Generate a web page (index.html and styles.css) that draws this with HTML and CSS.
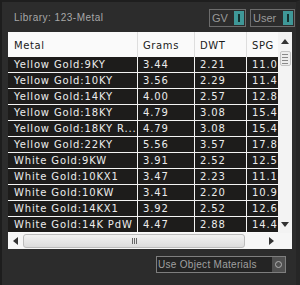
FILE: index.html
```html
<!DOCTYPE html>
<html>
<head>
<meta charset="utf-8">
<link rel="stylesheet" href="styles.css">
</head>
<body>
<div class="panel">
  <div class="topbar">
    <span class="lib">Library: 123-Metal</span>
    <div class="toggles">
      <div class="toggle"><span class="tlabel">GV</span><span class="tbtn"></span></div>
      <div class="toggle user"><span class="tlabel">User</span><span class="tbtn"></span></div>
    </div>
  </div>
  <div class="listbox">
    <div class="table">
      <div class="head">
        <div class="hc c1">Metal</div>
        <div class="hc">Grams</div>
        <div class="hc">DWT</div>
        <div class="hc">SPG</div>
      </div>
      <div class="body">
        <div class="row"><div class="c c1">Yellow Gold:9KY</div><div class="c">3.44</div><div class="c">2.21</div><div class="c">11.08</div></div>
        <div class="row"><div class="c c1">Yellow Gold:10KY</div><div class="c">3.56</div><div class="c">2.29</div><div class="c">11.45</div></div>
        <div class="row"><div class="c c1">Yellow Gold:14KY</div><div class="c">4.00</div><div class="c">2.57</div><div class="c">12.88</div></div>
        <div class="row"><div class="c c1">Yellow Gold:18KY</div><div class="c">4.79</div><div class="c">3.08</div><div class="c">15.41</div></div>
        <div class="row"><div class="c c1">Yellow Gold:18KY R...</div><div class="c">4.79</div><div class="c">3.08</div><div class="c">15.41</div></div>
        <div class="row"><div class="c c1">Yellow Gold:22KY</div><div class="c">5.56</div><div class="c">3.57</div><div class="c">17.89</div></div>
        <div class="row"><div class="c c1">White Gold:9KW</div><div class="c">3.91</div><div class="c">2.52</div><div class="c">12.59</div></div>
        <div class="row"><div class="c c1">White Gold:10KX1</div><div class="c">3.47</div><div class="c">2.23</div><div class="c">11.18</div></div>
        <div class="row"><div class="c c1">White Gold:10KW</div><div class="c">3.41</div><div class="c">2.20</div><div class="c">10.99</div></div>
        <div class="row"><div class="c c1">White Gold:14KX1</div><div class="c">3.92</div><div class="c">2.52</div><div class="c">12.61</div></div>
        <div class="row"><div class="c c1">White Gold:14K PdW</div><div class="c">4.47</div><div class="c">2.88</div><div class="c">14.40</div></div>
      </div>
    </div>
    <div class="vscroll">
      <svg class="arrow-up" width="8" height="5" viewBox="0 0 8 5"><path d="M0 5 L4 0 L8 5 Z" fill="#333"/></svg>
      <div class="vthumb"><i></i><i></i><i></i><i></i></div>
      <svg class="arrow-down" width="8" height="5" viewBox="0 0 8 5"><path d="M0 0 L4 5 L8 0 Z" fill="#333"/></svg>
    </div>
    <div class="hscroll">
      <svg width="5" height="8" viewBox="0 0 5 8"><path d="M5 0 L0 4 L5 8 Z" fill="#333"/></svg>
      <div class="hthumb"><i></i><i></i><i></i></div>
      <svg width="5" height="8" viewBox="0 0 5 8"><path d="M0 0 L5 4 L0 8 Z" fill="#333"/></svg>
    </div>
    <div class="corner"></div>
  </div>
  <div class="bottom">
    <div class="objmat"><span class="omlabel">Use Object Materials</span><span class="ombtn"><span class="circle"></span></span></div>
  </div>
</div>
</body>
</html>
```
FILE: styles.css
```css
html, body {
  margin: 0;
  padding: 0;
  background: #2c2c2c;
}
body {
  width: 300px;
  height: 285px;
  overflow: hidden;
}
.panel {
  box-sizing: border-box;
  width: 300px;
  height: 285px;
  border-top: 2px solid #1e1e1e;
  border-left: 2px solid #1d1d1d;
  border-right: 4px solid #262626;
  display: flex;
  flex-direction: column;
}
.topbar {
  height: 30px;
  display: flex;
  align-items: center;
  justify-content: space-between;
  padding-left: 12px;
  padding-right: 1px;
}
.lib {
  font-family: "Liberation Sans", Arial, sans-serif;
  font-size: 10px;
  letter-spacing: 0.5px;
  color: #a8a8a8;
  margin-top: 1px;
}
.toggles {
  display: flex;
  gap: 4px;
  margin-top: 7px;
  align-self: flex-start;
}
.toggle {
  box-sizing: border-box;
  height: 18px;
  border: 1px solid #6c6c6c;
  display: flex;
  align-items: center;
  padding: 0 1px 0 2px;
}
.toggle:first-child { width: 37px; }
.toggle.user { width: 45px; }
.tlabel {
  font-family: "Liberation Sans", Arial, sans-serif;
  font-size: 11px;
  color: #9a9a9a;
  flex: 1;
}
.tbtn {
  width: 10px;
  height: 14px;
  background: #3f9898;
  position: relative;
}
.tbtn::after {
  content: "";
  position: absolute;
  left: 4px;
  top: 3px;
  width: 2px;
  height: 8px;
  background: #13312f;
}
.listbox {
  margin-left: 6px;
  width: 284px;
  display: grid;
  grid-template-columns: 270px 14px;
  grid-template-rows: 201px 16px;
  background: #fafafa;
}
.table {
  font-family: "DejaVu Sans", Verdana, sans-serif;
  font-size: 10px;
  overflow: hidden;
}
.head {
  height: 25px;
  display: grid;
  grid-template-columns: 129px 56px 51px 31px;
  column-gap: 1px;
  background: #fafafa;
}
.hc {
  display: flex;
  align-items: center;
  padding-left: 5px;
  padding-top: 1px;
  color: #1a1a1a;
  letter-spacing: 0.6px;
  border-right: 1px solid #dedede;
  margin-right: -1px;
  white-space: nowrap;
}
.hc.c1 { padding-left: 6px; }
.hc:last-child { border-right: none; }
.body {
  display: flex;
  flex-direction: column;
  gap: 1px;
  background: #f4f4f4;
}
.row {
  height: 15px;
  display: grid;
  grid-template-columns: 129px 56px 51px 31px;
  column-gap: 1px;
}
.c {
  background: #1d1c1b;
  color: #ececec;
  padding-left: 5px;
  line-height: 15px;
  letter-spacing: 0.85px;
  white-space: nowrap;
  overflow: hidden;
}
.c.c1 { padding-left: 6px; }
.vscroll {
  background: #f3f3f3;
  display: flex;
  flex-direction: column;
  align-items: center;
  padding-top: 7px;
  padding-bottom: 6px;
}
.arrow-down { margin-top: auto; }
.vthumb {
  margin-top: 7px;
  width: 9px;
  height: 13px;
  border: 1px solid #c4c4c4;
  border-radius: 2px;
  background: #ececec;
  display: flex;
  flex-direction: column;
  justify-content: center;
  align-items: center;
  gap: 2px;
}
.vthumb i {
  display: block;
  width: 6px;
  height: 1px;
  background: #888;
}
.hscroll {
  background: #f6f6f6;
  display: flex;
  align-items: center;
  padding-left: 5px;
  padding-right: 4px;
  gap: 5px;
}
.hthumb {
  box-sizing: border-box;
  width: 222px;
  height: 14px;
  border: 1px solid #bcbcbc;
  border-radius: 3px;
  background: linear-gradient(#f2f2f2, #dcdcdc);
  display: flex;
  justify-content: center;
  align-items: center;
  gap: 1px;
}
.hthumb i {
  display: block;
  width: 1px;
  height: 6px;
  background: #666;
}
.hthumb + svg { margin-left: auto; }
.corner { background: #f6f6f6; }
.bottom {
  display: flex;
  justify-content: flex-end;
  padding-top: 7px;
  padding-right: 10px;
}
.objmat {
  box-sizing: border-box;
  width: 130px;
  height: 17px;
  border: 1px solid #7e7e7e;
  background: #242424;
  display: flex;
  align-items: center;
}
.omlabel {
  flex: 1;
  font-family: "Liberation Sans", Arial, sans-serif;
  font-size: 10px;
  color: #a0a0a0;
  padding-left: 1px;
  letter-spacing: 0.3px;
}
.ombtn {
  width: 13px;
  height: 15px;
  background: #505050;
  display: flex;
  align-items: center;
  justify-content: center;
}
.circle {
  box-sizing: border-box;
  width: 7px;
  height: 7px;
  border: 1px solid #b0b0b0;
  border-radius: 50%;
}
```
